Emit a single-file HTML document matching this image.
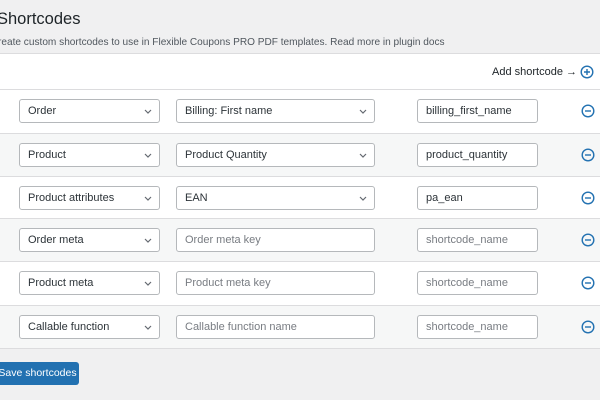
<!DOCTYPE html><html><head><style>
*{box-sizing:border-box;margin:0;padding:0}
body{width:600px;height:400px;background:#f0f0f1;font-family:"Liberation Sans",sans-serif;color:#1d2327;position:relative;overflow:hidden}
h1{position:absolute;left:-3px;top:10px;font-size:16.5px;font-weight:400}
.desc{position:absolute;left:-2px;top:37px;font-size:10.1px;color:#50575e}
.panel{position:absolute;left:0;top:53px;width:600px;height:296px;background:#fff;border-top:1px solid #dcdcde;border-bottom:1px solid #dcdcde}
.add{position:absolute;right:6px;top:11px;font-size:11px;display:flex;align-items:center;gap:3px}
.row{position:absolute;left:0;width:600px;height:43px;border-top:1px solid #dcdcde}
.row.g{background:#f6f7f7}
.f{position:absolute;top:9px;height:24px;border:1px solid #b5b8bb;border-radius:3px;background:#fff;font-size:11px;line-height:23px;padding-left:8px;color:#2c3338}
.f.ph{color:#787c82}
.s1{left:19px;width:141px}.s2{left:176px;width:199px}.s3{left:417px;width:121px}
.chev{position:absolute;right:6px;top:8px}
.m{position:absolute;left:581px;top:14px}
.btn{position:absolute;left:-4px;top:362px;width:83px;height:23px;background:#2271b1;border-radius:3px;color:#fff;font-size:10.5px;line-height:23px;text-align:center}
</style></head><body>
<h1>Shortcodes</h1>
<div class="desc">reate custom shortcodes to use in Flexible Coupons PRO PDF templates. Read more in plugin docs</div>
<div class="panel">
<div class="add">Add shortcode → <svg width="14" height="14" viewBox="0 0 14 14"><circle cx="7" cy="7" r="5.8" fill="none" stroke="#2271b1" stroke-width="1.4"/><path d="M4 7h6M7 4v6" stroke="#2271b1" stroke-width="1.4"/></svg></div>
</div>
<div class="row" style="top:89px"><div class="f s1">Order<svg class="chev" width="10" height="8"><path d="M2 2l3 3 3-3" fill="none" stroke="#646970" stroke-width="1.2"/></svg></div><div class="f s2">Billing: First name<svg class="chev" width="10" height="8"><path d="M2 2l3 3 3-3" fill="none" stroke="#646970" stroke-width="1.2"/></svg></div><div class="f s3">billing_first_name</div><svg class="m" width="14" height="14"><circle cx="7" cy="7" r="5.8" fill="none" stroke="#2271b1" stroke-width="1.4"/><path d="M4 7h6" stroke="#2271b1" stroke-width="1.4"/></svg></div>
<div class="row g" style="top:133px"><div class="f s1">Product<svg class="chev" width="10" height="8"><path d="M2 2l3 3 3-3" fill="none" stroke="#646970" stroke-width="1.2"/></svg></div><div class="f s2">Product Quantity<svg class="chev" width="10" height="8"><path d="M2 2l3 3 3-3" fill="none" stroke="#646970" stroke-width="1.2"/></svg></div><div class="f s3">product_quantity</div><svg class="m" width="14" height="14"><circle cx="7" cy="7" r="5.8" fill="none" stroke="#2271b1" stroke-width="1.4"/><path d="M4 7h6" stroke="#2271b1" stroke-width="1.4"/></svg></div>
<div class="row" style="top:176px"><div class="f s1">Product attributes<svg class="chev" width="10" height="8"><path d="M2 2l3 3 3-3" fill="none" stroke="#646970" stroke-width="1.2"/></svg></div><div class="f s2">EAN<svg class="chev" width="10" height="8"><path d="M2 2l3 3 3-3" fill="none" stroke="#646970" stroke-width="1.2"/></svg></div><div class="f s3">pa_ean</div><svg class="m" width="14" height="14"><circle cx="7" cy="7" r="5.8" fill="none" stroke="#2271b1" stroke-width="1.4"/><path d="M4 7h6" stroke="#2271b1" stroke-width="1.4"/></svg></div>
<div class="row g" style="top:218px"><div class="f s1">Order meta<svg class="chev" width="10" height="8"><path d="M2 2l3 3 3-3" fill="none" stroke="#646970" stroke-width="1.2"/></svg></div><div class="f s2 ph">Order meta key</div><div class="f s3 ph">shortcode_name</div><svg class="m" width="14" height="14"><circle cx="7" cy="7" r="5.8" fill="none" stroke="#2271b1" stroke-width="1.4"/><path d="M4 7h6" stroke="#2271b1" stroke-width="1.4"/></svg></div>
<div class="row" style="top:261px"><div class="f s1">Product meta<svg class="chev" width="10" height="8"><path d="M2 2l3 3 3-3" fill="none" stroke="#646970" stroke-width="1.2"/></svg></div><div class="f s2 ph">Product meta key</div><div class="f s3 ph">shortcode_name</div><svg class="m" width="14" height="14"><circle cx="7" cy="7" r="5.8" fill="none" stroke="#2271b1" stroke-width="1.4"/><path d="M4 7h6" stroke="#2271b1" stroke-width="1.4"/></svg></div>
<div class="row g" style="top:305px;border-bottom:1px solid #dcdcde;height:44px"><div class="f s1">Callable function<svg class="chev" width="10" height="8"><path d="M2 2l3 3 3-3" fill="none" stroke="#646970" stroke-width="1.2"/></svg></div><div class="f s2 ph">Callable function name</div><div class="f s3 ph">shortcode_name</div><svg class="m" width="14" height="14"><circle cx="7" cy="7" r="5.8" fill="none" stroke="#2271b1" stroke-width="1.4"/><path d="M4 7h6" stroke="#2271b1" stroke-width="1.4"/></svg></div>
<div class="btn">Save shortcodes</div>
</body></html>
